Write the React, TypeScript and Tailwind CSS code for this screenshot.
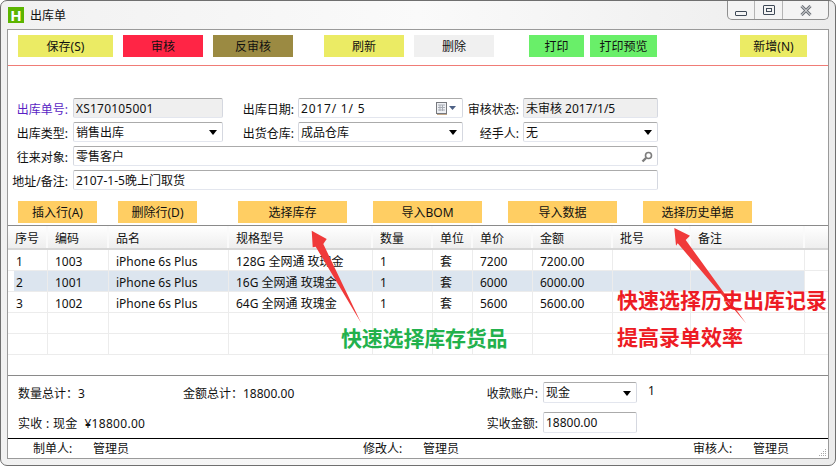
const toolbar = [
  { label: "保存(S)", cls: "w-[95px] bg-[#ebeb64]" },
  { label: "审核", cls: "w-[80px] ml-[10px] bg-[#ff2545]" },
  { label: "反审核", cls: "w-[80px] ml-[10px] bg-[#9b8a42]" },
  { label: "刷新", cls: "w-[80px] ml-[31px] bg-[#ebeb64]" },
  { label: "删除", cls: "w-[80px] ml-[10px] bg-[#f0f0f0]" },
  { label: "打印", cls: "w-[55px] ml-[35px] bg-[#69ef69]" },
  { label: "打印预览", cls: "w-[67px] ml-[6px] bg-[#69ef69]" },
  { label: "新增(N)", cls: "w-[67px] ml-[83px] bg-[#ebeb64]" },
];

const actions = [
  { label: "插入行(A)", cls: "w-[79px]" },
  { label: "删除行(D)", cls: "w-[79px] ml-[21px]" },
  { label: "选择库存", cls: "w-[109px] ml-[41px]" },
  { label: "导入BOM", cls: "w-[109px] ml-[26px]" },
  { label: "导入数据", cls: "w-[109px] ml-[26px]" },
  { label: "选择历史单据", cls: "w-[109px] ml-[26px]" },
];

const columns = ["序号", "编码", "品名", "规格型号", "数量", "单位", "单价", "金额", "批号", "备注"];
const colTemplate = "grid grid-cols-[6px_34px_61px_120px_144px_60px_40px_60px_80px_78px_114px_1fr]";

const rows = [
  ["1", "1003", "iPhone 6s Plus", "128G 全网通 玫瑰金", "1", "套", "7200", "7200.00", "", ""],
  ["2", "1001", "iPhone 6s Plus", "16G 全网通 玫瑰金", "1", "套", "6000", "6000.00", "", ""],
  ["3", "1002", "iPhone 6s Plus", "64G 全网通 玫瑰金", "1", "套", "5600", "5600.00", "", ""],
  ["", "", "", "", "", "", "", "", "", ""],
  ["", "", "", "", "", "", "", "", "", ""],
];

function Caret() {
  return <span className="ml-auto mr-[5px] h-0 w-0 border-x-[4px] border-t-[5px] border-x-transparent border-t-black" />;
}

function Field({ children, gray, cls }: { children?: React.ReactNode; gray?: boolean; cls?: string }) {
  return (
    <div
      className={`flex h-full items-center rounded-[2px] border border-t-[#ababab] border-l-[#d5d8e0] border-r-[#d5d8e0] border-b-[#e3e6ee] pl-[2px] pt-[1px] ${
        gray ? "bg-[#efefef]" : "bg-white"
      } ${cls ?? ""}`}
    >
      {children}
    </div>
  );
}

function Label({ text, cls }: { text: string; cls?: string }) {
  return <div className={`pt-[3px] text-right whitespace-nowrap ${cls ?? "pr-[4px]"}`}>{text}</div>;
}

export default function App() {
  return (
    <div className="relative h-[466px] w-[836px] overflow-hidden bg-white font-['Noto_Sans','Noto_Sans_CJK_SC',sans-serif] text-[12px] leading-none text-[#111]">
      <div className="flex h-full flex-col rounded-[7px] border border-[#6f6f6f] bg-gradient-to-r from-[#f1f1f1] via-[#fafafa] to-[#ececec] px-[6px] pb-[6px]">
        {/* title bar */}
        <div className="flex h-[28px] shrink-0 items-start">
          <div className="mt-[6px] ml-[1px] flex h-[16px] w-[16px] items-center justify-center bg-[#5cb500] text-[15px] font-bold text-white">
            H
          </div>
          <div className="mt-[9px] ml-[6px]">出库单</div>
          <div className="ml-auto flex h-[19px] w-[102px] rounded-b-[5px] border border-t-0 border-[#8f8f8f] bg-[#f4f4f4]">
            <div className="flex w-[27px] items-end justify-center border-r border-[#b5b5b5] pb-[3px]">
              <div className="h-[5px] w-[12px] rounded-[1px] border border-[#3f4a57]" />
            </div>
            <div className="flex w-[28px] items-start justify-center border-r border-[#b5b5b5] pt-[4px]">
              <div className="flex h-[10px] w-[12px] items-center justify-center rounded-[1px] border border-[#3f4a57]">
                <div className="h-[4px] w-[6px] border border-[#3f4a57]" />
              </div>
            </div>
            <div className="flex flex-1 items-start justify-center pt-[4px]">
              <svg width="12" height="11" viewBox="0 0 12 11">
                <path d="M1.5 1 L10.5 10 M10.5 1 L1.5 10" stroke="#6a6f76" strokeWidth="3" />
                <path d="M1.5 1 L10.5 10 M10.5 1 L1.5 10" stroke="#f4f4f4" strokeWidth="1" />
              </svg>
            </div>
          </div>
        </div>

        {/* client area */}
        <div className="flex min-h-0 flex-1 flex-col border border-[#9a9a9a] bg-white">
          <div className="flex h-[36px] shrink-0 items-start border-b border-[#f07c76] pt-[5px] pl-[10px]">
            {toolbar.map((b) => (
              <div key={b.label} className={`flex h-[22px] items-center justify-center pt-[1px] ${b.cls}`}>
                {b.label}
              </div>
            ))}
          </div>

          <div className="grid shrink-0 grid-cols-[65px_150px_75px_165px_60px_135px] grid-rows-[20px_20px_20px_20px] items-center gap-y-[4px] pt-[32px]">
            <Label text="出库单号:" cls="pr-[5px] text-[#5a1fc4]" />
            <Field gray>
              <span className="tracking-[0.2px]">XS170105001</span>
            </Field>
            <Label text="出库日期:" />
            <Field>
              <span className="tracking-[0.8px]">2017/ 1/ 5</span>
              <svg className="mr-[5px] ml-auto" width="21" height="13" viewBox="0 0 21 13">
                <rect x="0.5" y="0.5" width="10" height="11" fill="#eef0f4" stroke="#77797e" />
                <path d="M2 3h7M2 5.5h7M2 8h7M4 3v6M6.5 3v6" stroke="#a9adb5" />
                <path d="M1 12.5h10" stroke="#c2a88a" />
                <path d="M13 4h7l-3.5 4z" fill="#4d6185" />
              </svg>
            </Field>
            <Label text="审核状态:" />
            <Field gray>未审核 2017/1/5</Field>

            <Label text="出库类型:" cls="pr-[5px]" />
            <Field>
              销售出库
              <Caret />
            </Field>
            <Label text="出货仓库:" />
            <Field>
              成品仓库
              <Caret />
            </Field>
            <Label text="经手人:" />
            <Field>
              无
              <Caret />
            </Field>

            <Label text="往来对象:" cls="pr-[5px]" />
            <div className="col-span-5 h-full">
              <Field>
                零售客户
                <svg className="mr-[4px] ml-auto" width="12" height="12" viewBox="0 0 12 12" fill="none">
                  <circle cx="7.5" cy="4.5" r="3" stroke="#7d7d7d" strokeWidth="1.6" />
                  <path d="M5 7 L1.5 10.5" stroke="#7d7d7d" strokeWidth="2.4" />
                </svg>
              </Field>
            </div>

            <Label text="地址/备注:" cls="pr-[5px]" />
            <div className="col-span-5 h-full">
              <Field>2107-1-5晚上门取货</Field>
            </div>
          </div>

          <div className="mt-[11px] flex shrink-0 pl-[10px]">
            {actions.map((b) => (
              <div key={b.label} className={`flex h-[22px] items-center justify-center bg-[#ffce63] pt-[1px] ${b.cls}`}>
                {b.label}
              </div>
            ))}
          </div>

          {/* grid */}
          <div className="mt-[2px] h-[151px] shrink-0 border-y border-[#8a8a8a]">
            <div className={`${colTemplate} h-[24px] border-b-2 border-[#d6d6d6] bg-gradient-to-b from-white to-[#eeeeee]`}>
              <div />
              {columns.map((c, i) => (
                <div key={c} className={`flex items-center border-r-2 border-[#fafafa] pt-[3px] ${i === 0 ? "pl-[1px]" : "pl-[7px]"}`}>
                  {c}
                </div>
              ))}
              <div />
            </div>
            {rows.map((r, ri) => (
              <div key={ri} className={`${colTemplate} h-[21px]`}>
                <div className="border-b border-[#ececec]" />
                {r.map((cell, ci) => (
                  <div
                    key={ci}
                    className={`flex items-center border-r border-b border-r-[#ececec] border-b-[#ececec] pt-[3px] whitespace-nowrap ${
                      ci === 0 ? "pl-[2px]" : "pl-[7px]"
                    } ${ri === 1 ? "bg-[#dce5ef]" : ""}`}
                  >
                    {cell}
                  </div>
                ))}
                <div className="border-b border-[#ececec]" />
              </div>
            ))}
          </div>

          {/* totals */}
          <div className="flex h-[62px] shrink-0 flex-col gap-[9px] pt-[6px] pl-[10px]">
            <div className="flex h-[21px] items-center">
              <div className="w-[165px] pt-[2px]">数量总计：3</div>
              <div className="w-[300px] pt-[2px]">金额总计：18800.00</div>
              <div className="w-[60px] pt-[2px] pr-[5px] text-right">收款账户:</div>
              <div className="h-full w-[94px]">
                <Field>
                  现金
                  <Caret />
                </Field>
              </div>
              <div className="ml-[11px] self-start pt-[3px]">1</div>
            </div>
            <div className="flex h-[21px] items-center">
              <div className="w-[465px] pt-[3px] tracking-[0.3px] whitespace-pre">实收 : 现金  ¥18800.00</div>
              <div className="w-[60px] pt-[3px] pr-[5px] text-right">实收金额:</div>
              <div className="h-full w-[94px]">
                <Field>18800.00</Field>
              </div>
            </div>
          </div>

          {/* footer */}
          <div className="relative flex min-h-0 flex-1 items-center border-t border-black pt-[1px]">
            <div className="w-[85px] pl-[25px]">制单人:</div>
            <div className="w-[270px]">管理员</div>
            <div className="w-[60px]">修改人:</div>
            <div className="w-[270px]">管理员</div>
            <div className="w-[60px]">审核人:</div>
            <div>管理员</div>
            <svg className="absolute right-[1px] bottom-[1px]" width="9" height="9" viewBox="0 0 9 9" fill="#a8a8a8">
              <rect x="7" y="1" width="1" height="1" />
              <rect x="5" y="3" width="1" height="1" />
              <rect x="7" y="3" width="1" height="1" />
              <rect x="3" y="5" width="1" height="1" />
              <rect x="5" y="5" width="1" height="1" />
              <rect x="7" y="5" width="1" height="1" />
              <rect x="1" y="7" width="1" height="1" />
              <rect x="3" y="7" width="1" height="1" />
              <rect x="5" y="7" width="1" height="1" />
              <rect x="7" y="7" width="1" height="1" />
            </svg>
          </div>
        </div>
      </div>

      {/* annotations drawn over the screenshot */}
      <svg className="pointer-events-none absolute inset-0" width="836" height="466" viewBox="0 0 836 466">
        <polygon points="311.7,230.7 326.7,239 323.3,244 361,322.7 315.7,246.7 312.7,247.3" fill="#f03a3a" />
        <polygon points="674.3,228 690,235.7 685.7,240 746,323.3 677.7,243.3 676,245.7" fill="#f03a3a" />
      </svg>
      <div className="absolute top-[328px] left-[341px] text-[21px] leading-none font-bold tracking-[-0.2px] whitespace-nowrap text-[#22b14c]">
        快速选择库存货品
      </div>
      <div className="absolute top-[290px] left-[617px] text-[21px] leading-none font-bold whitespace-nowrap text-[#ed1c24]">
        快速选择历史出库记录
      </div>
      <div className="absolute top-[327px] left-[617px] text-[21px] leading-none font-bold whitespace-nowrap text-[#ed1c24]">
        提高录单效率
      </div>
    </div>
  );
}
